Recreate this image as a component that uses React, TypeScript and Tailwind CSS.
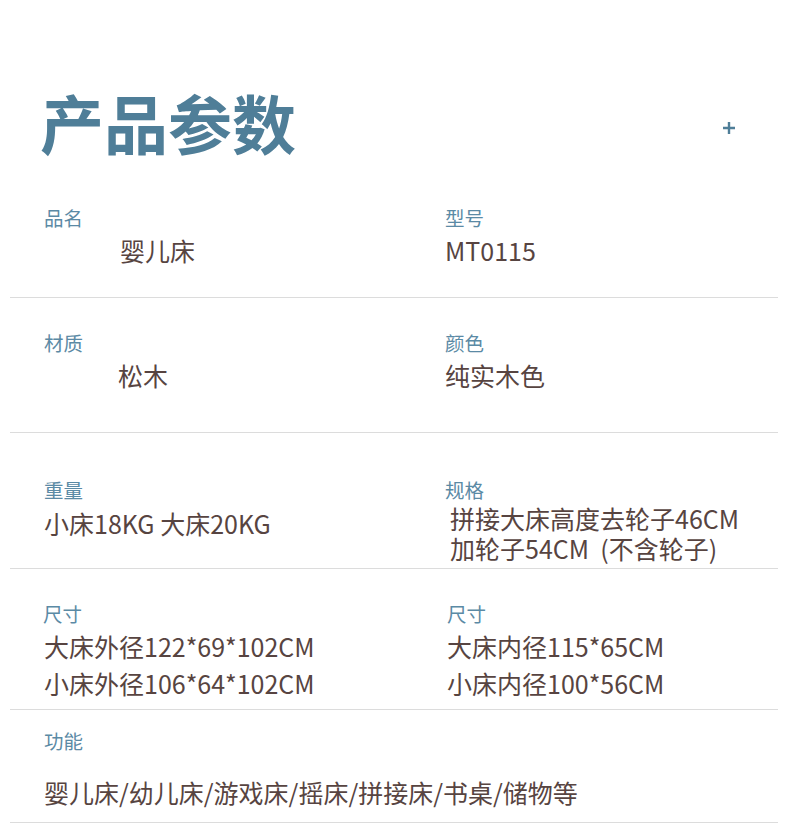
const font = { fontFamily: '"Noto Sans CJK SC", "Noto Sans", sans-serif' };

function Label({ children, className = "" }: { children: React.ReactNode; className?: string }) {
  return <div className={`text-[19.5px] leading-[24px] text-[#5b8aa5] ${className}`}>{children}</div>;
}

function Value({ children, className = "" }: { children: React.ReactNode; className?: string }) {
  return <div className={`text-[25px] leading-[30px] text-[#574441] whitespace-pre ${className}`}>{children}</div>;
}

export default function App() {
  return (
    <div className="w-[790px] h-[827px] bg-white overflow-hidden" style={font}>
      {/* Header */}
      <div className="h-[190px] pt-[89px] pl-[40px] pr-[54px] flex justify-between items-start">
        <h1 className="text-[64px] leading-none font-bold text-[#4f7e98]">产品参数</h1>
        <svg width="14" height="14" viewBox="0 0 14 14" className="mt-[32px]">
          <path d="M7 1v12M1 7h12" stroke="#4f7e98" strokeWidth="2.4" />
        </svg>
      </div>

      <div className="ml-[10px] mr-[12px]">
        {/* Row 1 */}
        <div className="h-[108px] pt-[16px] border-b border-[#dcdcdc] grid grid-cols-[401px_1fr] pl-[34px]">
          <div>
            <Label>品名</Label>
            <Value className="mt-[5px] pl-[76px]">婴儿床</Value>
          </div>
          <div>
            <Label>型号</Label>
            <Value className="mt-[5px]">MT0115</Value>
          </div>
        </div>

        {/* Row 2 */}
        <div className="h-[135px] pt-[33px] border-b border-[#dcdcdc] grid grid-cols-[401px_1fr] pl-[34px]">
          <div>
            <Label>材质</Label>
            <Value className="mt-[5px] pl-[74px]">松木</Value>
          </div>
          <div>
            <Label>颜色</Label>
            <Value className="mt-[5px]">纯实木色</Value>
          </div>
        </div>

        {/* Row 3 */}
        <div className="h-[136px] pt-[45px] border-b border-[#dcdcdc] grid grid-cols-[401px_1fr] pl-[34px]">
          <div>
            <Label>重量</Label>
            <Value className="mt-[6px]">小床18KG 大床20KG</Value>
          </div>
          <div>
            <Label>规格</Label>
            <div className="pl-[5px] mt-[1px]">
              <Value>拼接大床高度去轮子46CM</Value>
              <Value>{"加轮子54CM  (不含轮子)"}</Value>
            </div>
          </div>
        </div>

        {/* Row 4 */}
        <div className="h-[141px] pt-[33px] border-b border-[#dcdcdc] grid grid-cols-[401px_1fr] pl-[34px]">
          <div>
            <Label className="-ml-[1px]">尺寸</Label>
            <Value className="mt-[5px]">大床外径122*69*102CM</Value>
            <Value className="mt-[7px]">小床外径106*64*102CM</Value>
          </div>
          <div className="pl-[2px]">
            <Label>尺寸</Label>
            <Value className="mt-[5px]">大床内径115*65CM</Value>
            <Value className="mt-[7px]">小床内径100*56CM</Value>
          </div>
        </div>

        {/* Row 5 */}
        <div className="h-[113px] pt-[19px] border-b border-[#dcdcdc] pl-[34px]">
          <Label>功能</Label>
          <Value className="mt-[24px]">婴儿床/幼儿床/游戏床/摇床/拼接床/书桌/储物等</Value>
        </div>
      </div>
    </div>
  );
}
